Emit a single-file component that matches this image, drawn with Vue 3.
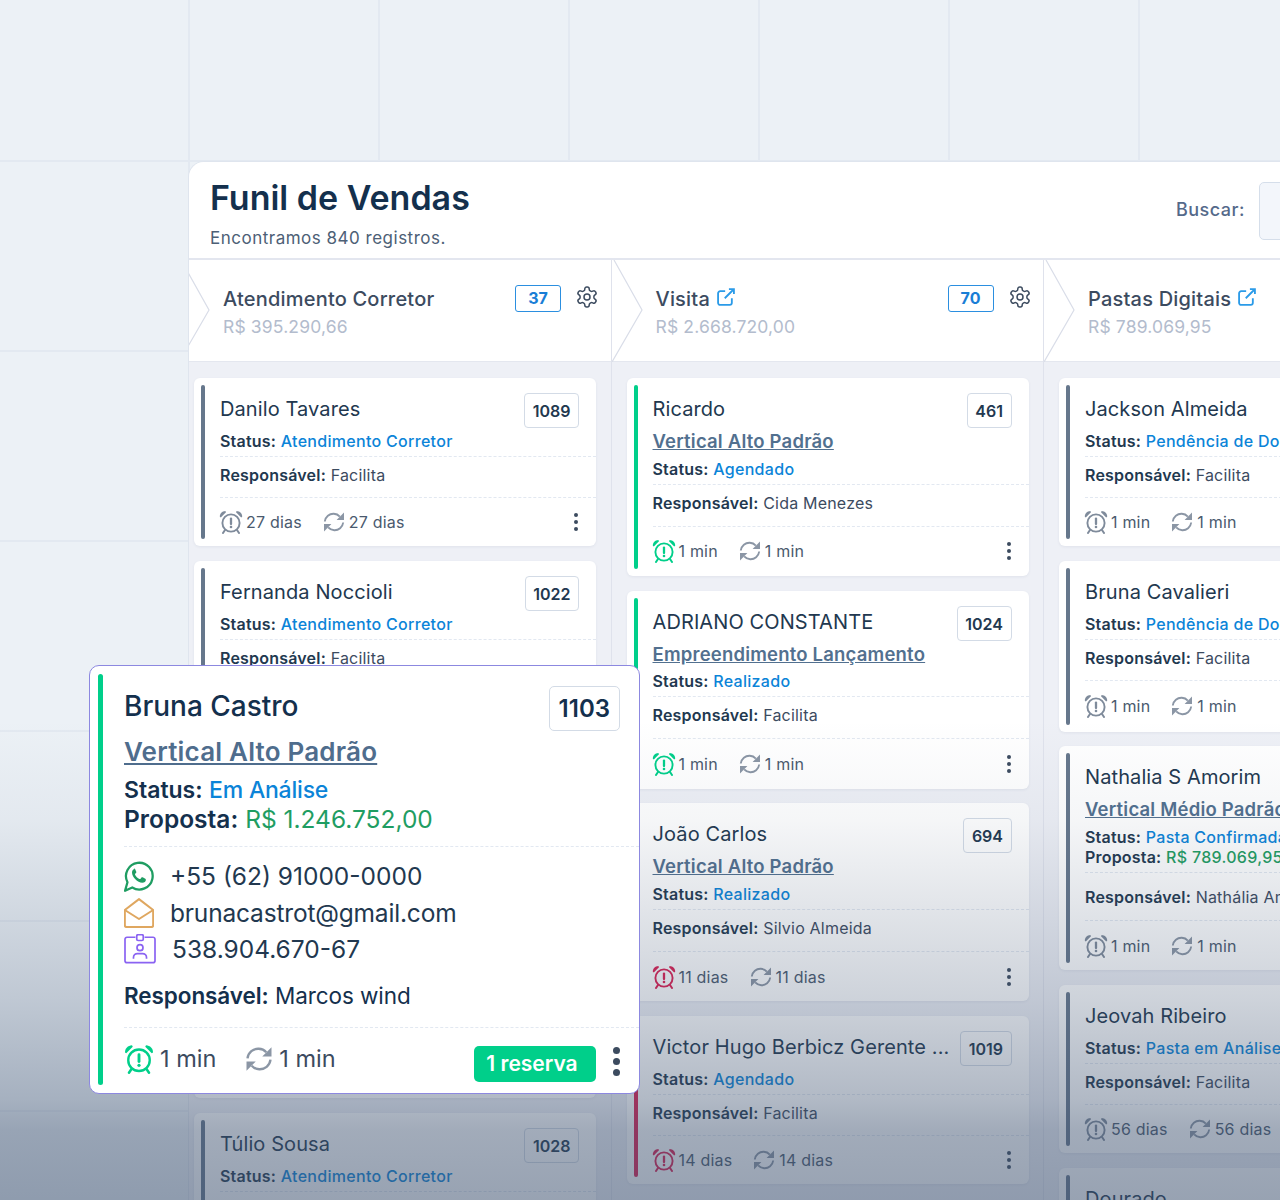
<template>
<div class="page">
  <!-- icon sprite -->
  <svg class="sprite" width="0" height="0">
    <symbol id="alarm" viewBox="0 0 24 24">
      <circle cx="12" cy="13" r="8.6" fill="none" stroke="currentColor" stroke-width="1.9"/>
      <path d="M.8 6.800C.8 3.400 3 1.200 6.400 1l.6 1.200L1.800 7.400z" fill="currentColor"/>
      <path d="M23.200 6.800C23.200 3.400 21 1.200 17.600 1L17 2.200l5.200 5.200z" fill="currentColor"/>
      <path d="M6 20l-2 3M18 20l2 3" stroke="currentColor" stroke-width="2" stroke-linecap="round"/>
      <path d="M12 8.600v5.400" stroke="currentColor" stroke-width="2.300" stroke-linecap="round"/>
      <circle cx="12" cy="17" r="1.300" fill="currentColor"/>
    </symbol>
    <symbol id="sync" viewBox="0 0 24 24">
      <path d="M2.800 11.500C3.400 6.600 7.400 3.600 11.800 3.800c2.400.1 4.500 1.100 6 2.800" fill="none" stroke="currentColor" stroke-width="1.900"/>
      <path d="M22 2.600v7.400h-7.400z" fill="currentColor"/>
      <path d="M21.200 12.500c-.6 4.900-4.600 7.900-9 7.700-2.400-.1-4.500-1.100-6-2.800" fill="none" stroke="currentColor" stroke-width="1.900"/>
      <path d="M2 21.400V14h7.400z" fill="currentColor"/>
    </symbol>
    <symbol id="gear" viewBox="0 0 24 24">
      <path d="M12.220 2h-.44a2 2 0 0 0-2 2v.18a2 2 0 0 1-1 1.730l-.43.250a2 2 0 0 1-2 0l-.15-.08a2 2 0 0 0-2.730.730l-.22.380a2 2 0 0 0 .730 2.730l.15.100a2 2 0 0 1 1 1.720v.510a2 2 0 0 1-1 1.740l-.15.090a2 2 0 0 0-.730 2.730l.22.380a2 2 0 0 0 2.730.730l.15-.08a2 2 0 0 1 2 0l.43.250a2 2 0 0 1 1 1.730V20a2 2 0 0 0 2 2h.44a2 2 0 0 0 2-2v-.18a2 2 0 0 1 1-1.730l.43-.25a2 2 0 0 1 2 0l.15.080a2 2 0 0 0 2.730-.730l.22-.390a2 2 0 0 0-.730-2.730l-.15-.080a2 2 0 0 1-1-1.740v-.5a2 2 0 0 1 1-1.740l.15-.090a2 2 0 0 0 .730-2.730l-.22-.380a2 2 0 0 0-2.730-.730l-.15.080a2 2 0 0 1-2 0l-.43-.25a2 2 0 0 1-1-1.730V4a2 2 0 0 0-2-2z" fill="none" stroke="currentColor" stroke-width="1.500"/>
      <circle cx="12" cy="12" r="3" fill="none" stroke="currentColor" stroke-width="1.500"/>
    </symbol>
    <symbol id="ext" viewBox="0 0 24 24">
      <path d="M19 13.500V19a2.500 2.500 0 0 1-2.500 2.500H5A2.500 2.500 0 0 1 2.500 19V7.500A2.500 2.500 0 0 1 5 5h6" fill="none" stroke="currentColor" stroke-width="2.200"/>
      <path d="M15.500 2.500h6v6M21 3L10.500 13.500" fill="none" stroke="currentColor" stroke-width="2.200"/>
    </symbol>
  </svg>

  <div class="panel">
    <header class="top">
      <div>
        <h1>Funil de Vendas</h1>
        <p>Encontramos 840 registros.</p>
      </div>
      <div class="search">
        <label>Buscar:</label>
        <div class="input"></div>
      </div>
    </header>

    <div class="columns">
      <section v-for="col in columns" :key="col.title" class="col">
        <div class="col-head">
          <svg class="chev" width="32" height="102" viewBox="0 0 32 102">
            <path d="M2 0L30 50L0 102" fill="none" stroke="#d9dde8" stroke-width="1.200"/>
          </svg>
          <div class="col-title">
            <div class="col-name">
              <span>{{ col.title }}</span>
              <svg v-if="col.link" class="ext"><use href="#ext"/></svg>
            </div>
            <div class="col-value">{{ col.value }}</div>
          </div>
          <template v-if="col.count">
            <span class="count">{{ col.count }}</span>
            <svg class="gear"><use href="#gear"/></svg>
          </template>
        </div>

        <div class="cards">
          <article
            v-for="card in col.cards"
            :key="card.id"
            class="card"
            :class="[card.size, { 'has-place': card.place, 'has-offer': card.offer }]"
          >
            <i class="bar" :class="card.tone"></i>
            <div class="card-top">
              <h3>{{ card.name }}</h3>
              <span class="code">{{ card.id }}</span>
            </div>
            <div class="info">
              <a v-if="card.place" class="place">{{ card.place }}</a>
              <div class="line"><b>Status:</b> <span class="blue">{{ card.status }}</span></div>
              <div v-if="card.offer" class="line"><b>Proposta:</b> <span class="green">{{ card.offer }}</span></div>
            </div>
            <div class="resp"><b>Responsável:</b> {{ card.owner }}</div>
            <div class="foot">
              <svg class="ico" :class="card.tone"><use href="#alarm"/></svg>
              <span>{{ card.time }}</span>
              <svg class="ico sync"><use href="#sync"/></svg>
              <span>{{ card.time }}</span>
              <span class="dots"><i></i><i></i><i></i></span>
            </div>
          </article>
        </div>
      </section>
    </div>
  </div>

  <div class="fade"></div>

  <!-- highlighted card -->
  <article class="pop">
    <i class="pop-bar"></i>
    <div class="pop-top">
      <h2>Bruna Castro</h2>
      <span class="pop-code">1103</span>
    </div>
    <a class="pop-place">Vertical Alto Padrão</a>
    <div class="pop-status">
      <div><b>Status:</b> <span class="blue">Em Análise</span></div>
      <div class="pop-offer"><b>Proposta:</b> <span class="green">R$ 1.246.752,00</span></div>
    </div>
    <div class="contacts">
      <div class="contact">
        <svg width="30" height="31" viewBox="1 1 22.500 23">
          <path d="M1.800 23.200l1.800-6.400A10 10 0 1 1 7.200 20.700z" fill="none" stroke="#1f9d62" stroke-width="1.700" stroke-linejoin="round"/>
          <path d="M9 6.800c-.9 0-2 1-2 2.700 0 3.400 4.200 7.700 7.700 7.700 1.600 0 2.700-1.100 2.700-2.100 0-.5-.1-.8-.4-1l-2-1c-.4-.2-.7-.1-.9.200l-.8 1c-.2.200-.4.200-.7.100-1.400-.6-2.700-1.900-3.300-3.200-.1-.3 0-.5.100-.7l.7-.8c.2-.3.200-.5.100-.8l-.9-2.100c-.1-.3-.3-.4-.6-.4z" fill="#1f9d62"/>
        </svg>
        <span>+55 (62) 91000-0000</span>
      </div>
      <div class="contact mail">
        <svg width="30" height="30" viewBox="1 1 22 22">
          <path d="M1.600 9.800L12 1.800l10.400 8V21a1.300 1.300 0 0 1-1.300 1.300H2.900A1.300 1.300 0 0 1 1.600 21z" fill="none" stroke="#dfa760" stroke-width="1.500" stroke-linejoin="round"/>
          <path d="M1.600 9.800L12 16.400l10.400-6.600" fill="none" stroke="#dfa760" stroke-width="1.500" stroke-linejoin="round"/>
        </svg>
        <span>brunacastrot@gmail.com</span>
      </div>
      <div class="contact">
        <svg width="32" height="30" viewBox="1 .500 24 23">
          <path d="M9.500 3H3a1.500 1.500 0 0 0-1.500 1.500V21A1.500 1.500 0 0 0 3 22.500h20a1.500 1.500 0 0 0 1.500-1.500V4.500A1.500 1.500 0 0 0 23 3h-6.500" fill="none" stroke="#8a63f2" stroke-width="1.300"/>
          <rect x="10.500" y="1" width="5" height="4.500" rx="1" fill="none" stroke="#8a63f2" stroke-width="1.300"/>
          <circle cx="13" cy="11" r="2.300" fill="none" stroke="#8a63f2" stroke-width="1.300"/>
          <path d="M8 19.500v-1a3 3 0 0 1 3-3h4a3 3 0 0 1 3 3v1" fill="none" stroke="#8a63f2" stroke-width="1.300"/>
        </svg>
        <span>538.904.670-67</span>
      </div>
    </div>
    <div class="pop-resp"><b>Responsável:</b> Marcos wind</div>
    <div class="pop-foot">
      <svg class="pop-ico green-ico"><use href="#alarm"/></svg>
      <span>1 min</span>
      <svg class="pop-ico sync gap"><use href="#sync"/></svg>
      <span>1 min</span>
      <button class="reserve">1 reserva</button>
      <span class="dots big"><i></i><i></i><i></i></span>
    </div>
  </article>
</div>
</template>

<script setup>
const columns = [
  {
    title: 'Atendimento Corretor',
    value: 'R$ 395.290,66',
    count: 37,
    cards: [
      { id: 1089, name: 'Danilo Tavares', status: 'Atendimento Corretor', owner: 'Facilita', time: '27 dias', tone: 'grey' },
      { id: 1022, name: 'Fernanda Noccioli', status: 'Atendimento Corretor', owner: 'Facilita', time: '27 dias', tone: 'grey' },
      { id: 1031, name: 'Marina Lopes', status: 'Atendimento Corretor', owner: 'Facilita', time: '27 dias', tone: 'grey' },
      { id: 1030, name: 'Paulo Reis', status: 'Atendimento Corretor', owner: 'Facilita', time: '27 dias', tone: 'grey', size: 'xtall' },
      { id: 1028, name: 'Túlio Sousa', status: 'Atendimento Corretor', owner: 'Facilita', time: '27 dias', tone: 'grey' }
    ]
  },
  {
    title: 'Visita',
    link: true,
    value: 'R$ 2.668.720,00',
    count: 70,
    cards: [
      { id: 461, name: 'Ricardo', place: 'Vertical Alto Padrão', status: 'Agendado', owner: 'Cida Menezes', time: '1 min', tone: 'ok' },
      { id: 1024, name: 'ADRIANO CONSTANTE', place: 'Empreendimento Lançamento', status: 'Realizado', owner: 'Facilita', time: '1 min', tone: 'ok' },
      { id: 694, name: 'João Carlos', place: 'Vertical Alto Padrão', status: 'Realizado', owner: 'Silvio Almeida', time: '11 dias', tone: 'late' },
      { id: 1019, name: 'Victor Hugo Berbicz Gerente ...', status: 'Agendado', owner: 'Facilita', time: '14 dias', tone: 'late' }
    ]
  },
  {
    title: 'Pastas Digitais',
    link: true,
    value: 'R$ 789.069,95',
    cards: [
      { id: 1101, name: 'Jackson Almeida', status: 'Pendência de Documentos', owner: 'Facilita', time: '1 min', tone: 'grey' },
      { id: 1102, name: 'Bruna Cavalieri', status: 'Pendência de Documentos', owner: 'Facilita', time: '1 min', tone: 'grey', size: 'tall' },
      { id: 1104, name: 'Nathalia S Amorim', place: 'Vertical Médio Padrão', status: 'Pasta Confirmada', offer: 'R$ 789.069,95', owner: 'Nathália Amorim', time: '1 min', tone: 'grey' },
      { id: 1105, name: 'Jeovah Ribeiro', status: 'Pasta em Análise', owner: 'Facilita', time: '56 dias', tone: 'grey' },
      { id: 1106, name: 'Dourado', status: 'Pasta em Análise', owner: 'Facilita', time: '56 dias', tone: 'grey' }
    ]
  }
]
</script>

<style>
html, body { margin: 0; }
</style>

<style scoped>
.page {
  position: relative;
  width: 1280px;
  height: 1200px;
  overflow: hidden;
  box-sizing: border-box;
  padding: 161px 0 0 188px;
  font-family: Inter, "Noto Sans", sans-serif;
  color: #14304d;
  background-color: #ecf1f6;
  background-image:
    linear-gradient(#e3e9f1 2px, transparent 2px),
    linear-gradient(90deg, #e3e9f1 2px, transparent 2px);
  background-size: 190px 190px;
  background-position: 0 160px, -2px 0;
}
.sprite { position: absolute; }

.panel {
  width: 1293px;
  height: 1039px;
  box-sizing: border-box;
  border: 1px solid #dfe5ee;
  border-right: 0;
  border-bottom: 0;
  border-radius: 16px 0 0 0;
  background: #eef0f6;
  overflow: hidden;
}
.top {
  height: 98px;
  box-sizing: border-box;
  padding: 14px 20px 0 21px;
  background: #fff;
  border-bottom: 2px solid #e3e6ef;
  display: flex;
  justify-content: space-between;
}
h1 {
  margin: 0;
  font-size: 34px;
  line-height: 44px;
  font-weight: 600;
}
.top p {
  margin: 8px 0 0;
  font-size: 17px;
  line-height: 20px;
  letter-spacing: .5px;
  color: #4d6076;
}
.search {
  display: flex;
  align-items: flex-start;
  gap: 14px;
  padding-top: 6px;
}
.search label {
  font-size: 18px;
  line-height: 56px;
  font-weight: 500;
  letter-spacing: .5px;
  color: #54698a;
}
.input {
  width: 200px;
  height: 56px;
  background: #f3f6fb;
  border: 1px solid #d5deea;
  border-radius: 5px;
}

.columns {
  display: flex;
  margin-left: -10px;
}
.col {
  flex: 0 0 432.500px;
  min-width: 0;
  box-sizing: border-box;
  border-right: 1px solid #dfe2ec;
  height: 940px;
}
.col-head {
  position: relative;
  height: 102px;
  box-sizing: border-box;
  background: #fff;
  border-bottom: 1px solid #e4e7ef;
  padding: 26px 0 0 44px;
  display: flex;
  align-items: flex-start;
}
.chev { position: absolute; left: 0; top: 0; }
.col-title { width: 292px; flex-shrink: 0; }
.col-name {
  display: flex;
  align-items: center;
  gap: 6px;
  font-size: 20px;
  line-height: 26px;
  font-weight: 500;
  letter-spacing: .2px;
  color: #3c4b5f;
}
.ext { width: 20px; height: 20px; color: #2b9be8; margin-top: -5px; }
.col-value {
  margin-top: 3px;
  font-size: 17.500px;
  line-height: 24px;
  letter-spacing: .15px;
  color: #b3bccd;
}
.count {
  width: 46px;
  height: 27px;
  margin-top: -1px;
  box-sizing: border-box;
  border: 1.500px solid #2b8fe0;
  border-radius: 3px;
  font-size: 16px;
  line-height: 24px;
  font-weight: 700;
  text-align: center;
  color: #1a7ed6;
}
.gear { width: 24px; height: 24px; margin: -1px 0 0 14px; color: #3c4b5f; }

.cards {
  display: flex;
  flex-direction: column;
  gap: 14.670px;
  padding: 16px 14px 0 15px;
}
.card {
  position: relative;
  width: 402px;
  min-height: 168px;
  box-sizing: border-box;
  padding: 15px 0 0 26px;
  background: #fff;
  border-radius: 6px;
  box-shadow: 0 1px 3px rgba(60, 75, 110, .08);
  display: flex;
  flex-direction: column;
  flex-shrink: 0;
}
.card.tall { min-height: 171px; }
.card.xtall { min-height: 172.500px; }
.card.has-place { min-height: 198px; }
.card.has-offer { min-height: 224px; }
.bar {
  position: absolute;
  left: 7px;
  top: 7px;
  bottom: 7px;
  width: 4px;
  border-radius: 2px;
}
.bar.grey { background: #66778c; }
.bar.ok { background: #00cf8a; }
.bar.late { background: #dd1f52; }
.card-top {
  display: flex;
  justify-content: space-between;
  align-items: flex-start;
  height: 32px;
  padding-right: 17px;
}
h3 {
  margin: 0;
  font-size: 20px;
  line-height: 32px;
  font-weight: 400;
  letter-spacing: .1px;
  color: #22384f;
  white-space: nowrap;
}
.code {
  height: 35px;
  box-sizing: border-box;
  padding: 0 7.500px;
  border: 1px solid #d3dbe6;
  border-radius: 4px;
  font-size: 16px;
  line-height: 35px;
  font-weight: 600;
  color: #22384f;
}
.info {
  margin-top: 6px;
  padding-bottom: 5px;
  border-bottom: 1px dashed #e2e8f1;
}
.place {
  display: block;
  margin-bottom: 6px;
  font-size: 18.500px;
  line-height: 21.500px;
  font-weight: 600;
  letter-spacing: .2px;
  color: #52708f;
  text-decoration: underline;
  white-space: nowrap;
}
.line, .resp {
  font-size: 16px;
  line-height: 20px;
  letter-spacing: .2px;
  color: #3c4b5f;
  white-space: nowrap;
}
.line b, .resp b { font-weight: 600; color: #22384f; }
.line .blue, .line .green { font-weight: 500; letter-spacing: .3px; }
.blue { color: #0b84d8; }
.green { color: #1f9d62; }
.resp {
  padding: 8px 0 12px;
  border-bottom: 1px dashed #e2e8f1;
}
.has-place .resp { padding-bottom: 13px; }
.has-offer .resp { padding-top: 14px; }
.foot {
  flex: 1;
  min-height: 48px;
  display: flex;
  align-items: center;
  font-size: 16px;
  letter-spacing: .2px;
  color: #4a5a6e;
  padding-right: 18px;
}
.ico {
  width: 24px;
  height: 24px;
  margin: 0 3px 0 -1px;
  flex-shrink: 0;
}
.ico.grey { color: #7f8b9b; }
.ico.ok { color: #00cf8a; }
.ico.late { color: #dd1f52; }
.ico.sync { color: #8b96a5; margin-left: 20px; }
.dots {
  margin-left: auto;
  display: flex;
  flex-direction: column;
  gap: 3px;
}
.dots i {
  width: 4px;
  height: 4px;
  border-radius: 50%;
  background: #3c4b5f;
}

.fade {
  position: absolute;
  left: 0;
  right: 0;
  top: 720px;
  bottom: 0;
  background: linear-gradient(
    rgba(60, 80, 110, 0) 0,
    rgba(60, 80, 110, .05) 100px,
    rgba(60, 80, 110, .256) 280px,
    rgba(60, 80, 110, .4) 380px,
    rgba(60, 80, 110, .48) 410px,
    rgba(60, 80, 110, .53) 480px
  );
  pointer-events: none;
}

.pop {
  position: absolute;
  left: 89px;
  top: 665px;
  width: 551px;
  height: 429px;
  box-sizing: border-box;
  padding: 20px 0 0 34px;
  background: #fff;
  border: 1px solid #8c88e0;
  border-radius: 10px;
}
.pop-bar {
  position: absolute;
  left: 8px;
  top: 8px;
  bottom: 8px;
  width: 5px;
  border-radius: 3px;
  background: #00cf8a;
}
.pop-top {
  display: flex;
  justify-content: space-between;
  align-items: flex-start;
  height: 45px;
  padding-right: 19px;
}
h2 {
  margin: 0;
  font-size: 28px;
  line-height: 41px;
  font-weight: 500;
}
.pop-code {
  height: 45px;
  box-sizing: border-box;
  padding: 0 9px;
  border: 1px solid #d3dbe6;
  border-radius: 5px;
  font-size: 24px;
  line-height: 43px;
  font-weight: 600;
}
.pop-place {
  display: block;
  margin-top: 4px;
  font-size: 26px;
  line-height: 33px;
  font-weight: 600;
  letter-spacing: .2px;
  color: #4f6d8d;
  text-decoration: underline;
}
.pop-status {
  margin-top: 8px;
  padding-bottom: 13px;
  border-bottom: 1px dashed #e2e8f1;
  font-size: 23px;
  line-height: 28.500px;
}
.pop-offer { font-size: 24.500px; }
.pop-status b, .pop-resp b { font-weight: 600; }
.pop-status .blue { font-weight: 500; letter-spacing: -.2px; }
.pop-status .green { font-weight: 400; }
.contacts {
  display: flex;
  flex-direction: column;
  gap: 6px;
  margin-top: 14px;
}
.contact {
  display: flex;
  align-items: center;
  gap: 16px;
  height: 30.500px;
  font-size: 24.500px;
  color: #22384f;
}
.contact.mail { letter-spacing: -.18px; }
.pop-resp {
  margin-top: 16px;
  padding-bottom: 17px;
  border-bottom: 1px dashed #e2e8f1;
  font-size: 22.500px;
  line-height: 29px;
  letter-spacing: -.08px;
}
.pop-foot {
  display: flex;
  align-items: center;
  height: 62px;
  padding-right: 19px;
  font-size: 23.500px;
  color: #3c4b5f;
}
.pop-ico { width: 30px; height: 30px; margin-right: 6px; flex-shrink: 0; }
.green-ico { color: #00cf8a; }
.pop-ico.sync { color: #8b96a5; margin-right: 5px; }
.pop-ico.gap { margin-left: 28px; }
.reserve {
  margin: 10px 0 0 auto;
  width: 122px;
  height: 36px;
  padding: 0 6px 0 0;
  border: 0;
  border-radius: 5px;
  background: #00cf8a;
  color: #fff;
  font-family: inherit;
  font-size: 21px;
  font-weight: 600;
}
.dots.big { margin: 5px 0 0 17px; gap: 4px; }
.dots.big i { width: 7px; height: 7px; }
</style>
